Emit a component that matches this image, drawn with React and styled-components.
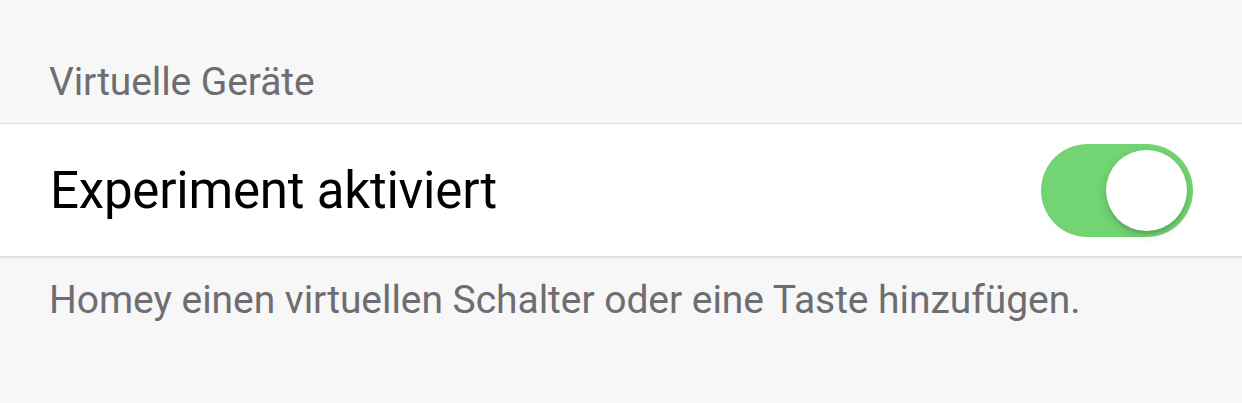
import { useState } from 'react';
import styled, { createGlobalStyle } from 'styled-components';

const GlobalStyle = createGlobalStyle`
  html, body {
    margin: 0;
    padding: 0;
    background-color: #f7f7f7;
    font-family: Roboto, "Noto Sans", sans-serif;
  }
`

const Page = styled.div`
  width: 100%;
  min-height: 100vh;
  background-color: #f7f7f7;
`

const SectionHeader = styled.div`
  padding: 59px 49px 18px;
  font-size: 39px;
  line-height: 46px;
  letter-spacing: -0.1px;
  color: #6d6d72;
`

const Row = styled.div`
  display: flex;
  align-items: center;
  justify-content: space-between;
  height: 132px;
  padding: 0 49px 0 50px;
  background-color: #ffffff;
  border-top: 1px solid #e0e0e0;
  border-bottom: 2px solid #e0e0e0;
`

const Label = styled.span`
  font-size: 51px;
  letter-spacing: -0.2px;
  color: #000000;
`

const Track = styled.button`
  position: relative;
  width: 152px;
  height: 93px;
  padding: 0;
  border: none;
  border-radius: 47px;
  cursor: pointer;
  background-color: ${props => (props.$on ? '#72d472' : '#e5e5ea')};
  transition: background-color 0.2s ease;
`

const Knob = styled.span`
  position: absolute;
  top: 6px;
  left: ${props => (props.$on ? '65px' : '6px')};
  width: 81px;
  height: 81px;
  border-radius: 50%;
  background-color: #ffffff;
  box-shadow: 0 4px 10px rgba(0, 0, 0, 0.16), 0 3px 2px rgba(0, 0, 0, 0.08);
  transition: left 0.2s ease;
`

const Footer = styled.div`
  padding: 19px 49px;
  font-size: 39px;
  line-height: 46px;
  letter-spacing: -0.05px;
  color: #6d6d72;
`

function App() {
  const [ativo, setAtivo] = useState(true)

  return (
    <Page>
      <GlobalStyle />
      <SectionHeader>Virtuelle Geräte</SectionHeader>
      <Row>
        <Label>Experiment aktiviert</Label>
        <Track $on={ativo} onClick={() => setAtivo(!ativo)} aria-pressed={ativo}>
          <Knob $on={ativo} />
        </Track>
      </Row>
      <Footer>Homey einen virtuellen Schalter oder eine Taste hinzufügen.</Footer>
    </Page>
  );
}

export default App;
